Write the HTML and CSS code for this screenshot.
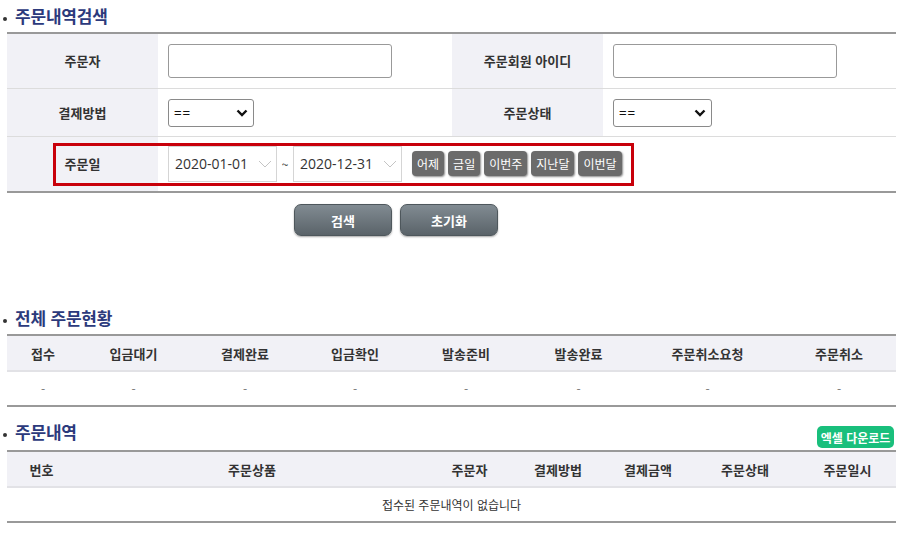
FILE: index.html
```html
<!DOCTYPE html>
<html lang="ko">
<head>
<meta charset="utf-8">
<title>주문내역검색</title>
<link rel="stylesheet" href="styles.css">
</head>
<body>
<div class="page">
  <h2 class="section-title"><span class="dot"></span>주문내역검색</h2>
  <table class="search-table">
    <colgroup>
      <col class="c-label"><col class="c-field"><col class="c-label"><col class="c-field2">
    </colgroup>
    <tr class="row-1">
      <th>주문자</th>
      <td><div class="text-input"></div></td>
      <th>주문회원 아이디</th>
      <td><div class="text-input"></div></td>
    </tr>
    <tr class="row-2">
      <th>결제방법</th>
      <td><div class="select select-a"><span>==</span><svg width="12" height="8" viewBox="0 0 12 8"><path d="M1.5 1.5 L6 6 L10.5 1.5" fill="none" stroke="#111" stroke-width="2.4"/></svg></div></td>
      <th>주문상태</th>
      <td><div class="select select-b"><span>==</span><svg width="12" height="8" viewBox="0 0 12 8"><path d="M1.5 1.5 L6 6 L10.5 1.5" fill="none" stroke="#111" stroke-width="2.4"/></svg></div></td>
    </tr>
    <tr class="row-3">
      <th class="date-label"><span class="label-text">주문일</span></th>
      <td colspan="3" class="date-cell">
        <div class="date-row">
          <div class="date-input"><span>2020-01-01</span><svg width="14" height="8" viewBox="0 0 14 8"><path d="M1 1 L7 7 L13 1" fill="none" stroke="#c4c4c4" stroke-width="1"/></svg></div>
          <span class="tilde">~</span>
          <div class="date-input"><span>2020-12-31</span><svg width="14" height="8" viewBox="0 0 14 8"><path d="M1 1 L7 7 L13 1" fill="none" stroke="#c4c4c4" stroke-width="1"/></svg></div>
          <div class="quick">
            <button class="qbtn">어제</button>
            <button class="qbtn">금일</button>
            <button class="qbtn">이번주</button>
            <button class="qbtn">지난달</button>
            <button class="qbtn">이번달</button>
          </div>
        </div>
        <div class="red-box"></div>
      </td>
    </tr>
  </table>
  <div class="actions">
    <button class="btn-main">검색</button>
    <button class="btn-main">초기화</button>
  </div>

  <h2 class="section-title title-2"><span class="dot"></span>전체 주문현황</h2>
  <table class="list-table status-table">
    <colgroup>
      <col style="width:72px"><col style="width:109px"><col style="width:114px"><col style="width:106px"><col style="width:116px"><col style="width:109px"><col style="width:149px"><col style="width:114px">
    </colgroup>
    <thead>
      <tr><th>접수</th><th>입금대기</th><th>결제완료</th><th>입금확인</th><th>발송준비</th><th>발송완료</th><th>주문취소요청</th><th>주문취소</th></tr>
    </thead>
    <tbody>
      <tr><td>-</td><td>-</td><td>-</td><td>-</td><td>-</td><td>-</td><td>-</td><td>-</td></tr>
    </tbody>
  </table>

  <div class="title-bar">
    <h2 class="section-title"><span class="dot"></span>주문내역</h2>
    <button class="excel-btn">엑셀 다운로드</button>
  </div>
  <table class="list-table order-table">
    <colgroup>
      <col style="width:69px"><col style="width:352px"><col style="width:83px"><col style="width:94px"><col style="width:86px"><col style="width:108px"><col style="width:97px">
    </colgroup>
    <thead>
      <tr><th>번호</th><th>주문상품</th><th>주문자</th><th>결제방법</th><th>결제금액</th><th>주문상태</th><th>주문일시</th></tr>
    </thead>
    <tbody>
      <tr><td colspan="7" class="empty">접수된 주문내역이 없습니다</td></tr>
    </tbody>
  </table>
</div>
</body>
</html>
```

FILE: styles.css
```css
* { box-sizing: border-box; }
html, body { margin: 0; padding: 0; background: #fff; }
body {
  font-family: "Noto Sans CJK KR", "Noto Sans", "Liberation Sans", sans-serif;
  color: #333;
  font-size: 13px;
}
.page {
  width: 889px;
  margin-left: 7px;
}
.section-title {
  margin: 0 0 0 -4px;
  height: 32px;
  display: flex;
  align-items: center;
  font-size: 17px;
  font-weight: 700;
  color: #2c3a7c;
  letter-spacing: -0.2px;
  padding-bottom: 1px;
}
.dot {
  width: 4px;
  height: 4px;
  border-radius: 50%;
  background: #333;
  margin-right: 8px;
  margin-top: 7px;
}

/* search table */
table { border-collapse: collapse; width: 889px; table-layout: fixed; }
.search-table {
  border-top: 2px solid #999;
  border-bottom: 2px solid #999;
}
.c-label { width: 151px; }
.c-field { width: 294px; }
.c-field2 { width: 293px; }
.search-table th {
  background: #f1f1f6;
  font-weight: 700;
  font-size: 13px;
  color: #333;
  text-align: center;
  padding: 0;
}
.search-table td { padding: 0 0 0 10px; }
.search-table tr + tr th,
.search-table tr + tr td { border-top: 1px solid #dcdcdc; }
.row-1 { height: 55px; }
.row-2 { height: 48px; }
.row-3 { height: 56px; }
.text-input {
  width: 224px;
  height: 34px;
  border: 1px solid #999;
  border-radius: 3px;
  background: #fff;
  margin-top: 1px;
}
.select {
  height: 28px;
  border: 1px solid #8a8a8a;
  border-radius: 3px;
  display: flex;
  align-items: center;
  justify-content: space-between;
  padding: 0 5px 0 5px;
  font-family: "Liberation Sans", sans-serif;
  font-size: 13px;
  color: #111;
  margin-top: 1px;
}
.select-a { width: 86px; }
.select-b { width: 99px; }
.select span { letter-spacing: 1px; }

.date-cell { position: relative; }
.date-row {
  display: flex;
  align-items: center;
}
.date-input {
  width: 109px;
  height: 36px;
  border: 1px solid #d5d5d5;
  background: #fff;
  display: flex;
  align-items: center;
  justify-content: space-between;
  padding: 0 4px 0 6px;
  font-family: "Open Sans", "Liberation Sans", sans-serif;
  font-size: 14px;
  color: #333;
}
.tilde {
  width: 16px;
  text-align: center;
  font-size: 12px;
  color: #333;
}
.quick {
  display: flex;
  gap: 4px;
  margin-left: 10px;
}
.qbtn {
  height: 25px;
  padding: 0 5px;
  border: none;
  border-radius: 4px;
  background: #6b6b6b;
  color: #fff;
  font-family: "Noto Sans CJK KR", sans-serif;
  font-size: 12px;
  line-height: 25px;
  box-shadow: 1px 1px 2px rgba(0,0,0,0.45);
  min-width: 32px;
}
.red-box {
  position: absolute;
  left: -105px;
  top: 6px;
  width: 581px;
  height: 43px;
  border: 3px solid #c8000a;
  pointer-events: none;
}

.actions {
  display: flex;
  justify-content: flex-start;
  gap: 8px;
  padding: 11px 0 0 287px;
  height: 109px;
}
.btn-main {
  width: 98px;
  height: 32px;
  border: 1px solid #4e575c;
  border-radius: 7px;
  background: linear-gradient(#818b92, #5a6369);
  color: #fff;
  font-family: "Noto Sans CJK KR", sans-serif;
  font-weight: 700;
  font-size: 13px;
  box-shadow: 0 1px 2px rgba(0,0,0,0.35);
}

/* list tables */
.list-table {
  border-top: 2px solid #999;
  border-bottom: 2px solid #999;
}
.list-table th {
  background: #f1f1f6;
  font-weight: 700;
  font-size: 13px;
  color: #333;
  height: 36px;
  padding: 0;
  text-align: center;
  border-bottom: 2px solid #e2e2e6;
}
.list-table td {
  text-align: center;
  height: 35px;
  padding: 0;
  color: #777;
  font-size: 12px;
}
.order-table td.empty { color: #333; font-size: 12px; height: 35px; }
.order-table th { height: 36px; }

.title-bar {
  display: flex;
  align-items: flex-end;
  justify-content: space-between;
  margin-top: 9px;
  padding-bottom: 2px;
}
.excel-btn {
  width: 77px;
  height: 22px;
  border: none;
  border-radius: 5px;
  background: #19bf7c;
  color: #fff;
  font-family: "Noto Sans CJK KR", sans-serif;
  font-weight: 700;
  font-size: 12px;
  padding: 0;
  margin-right: 2px;
}
```
